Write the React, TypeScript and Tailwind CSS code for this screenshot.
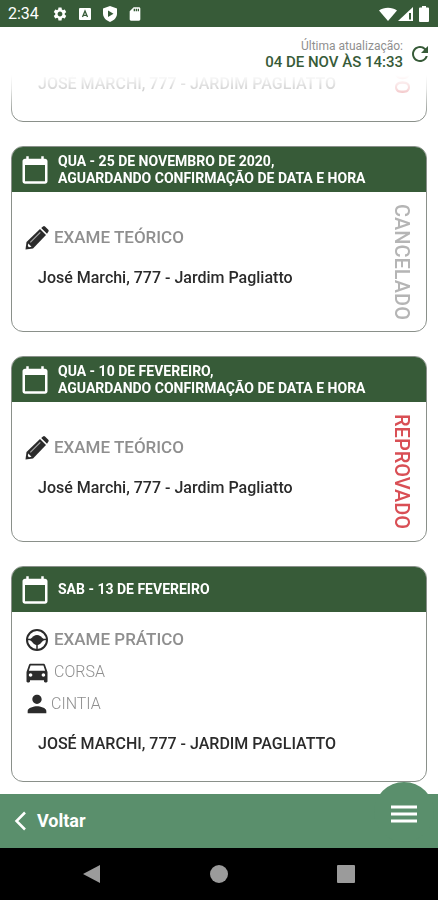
import { MdCalendarToday, MdDirectionsCar, MdPerson, MdRefresh, MdSdCard, MdSettings } from "react-icons/md"

type Exam = {
    id: number;
    title: string[];
    kind: "theory" | "practice";
    address: string;
    car?: string;
    teacher?: string;
    status?: "CANCELADO" | "REPROVADO";
}

const exams: Exam[] = [
    {
        id: 1,
        title: ["TER - 10 DE NOVEMBRO"],
        kind: "practice",
        car: "CORSA",
        teacher: "CINTIA",
        address: "JOSÉ MARCHI, 777 - JARDIM PAGLIATTO",
        status: "REPROVADO",
    },
    {
        id: 2,
        title: ["QUA - 25 DE NOVEMBRO DE 2020,", "AGUARDANDO CONFIRMAÇÃO DE DATA E HORA"],
        kind: "theory",
        address: "José Marchi, 777 - Jardim Pagliatto",
        status: "CANCELADO",
    },
    {
        id: 3,
        title: ["QUA - 10 DE FEVEREIRO,", "AGUARDANDO CONFIRMAÇÃO DE DATA E HORA"],
        kind: "theory",
        address: "José Marchi, 777 - Jardim Pagliatto",
        status: "REPROVADO",
    },
    {
        id: 4,
        title: ["SAB - 13 DE FEVEREIRO"],
        kind: "practice",
        car: "CORSA",
        teacher: "CINTIA",
        address: "JOSÉ MARCHI, 777 - JARDIM PAGLIATTO",
    },
]

const Pencil = () => (
    <svg viewBox="0 0 24 24" className="size-6 shrink-0" aria-hidden="true">
        <path d="M15 3l6 6L8 22.500.5 23.500 1.500 16z" fill="currentColor" />
        <path d="M16.200 2L18 .5q1-.8 2 0l3.300 3.300q.8 1 0 2L22 7.800z" fill="currentColor" />
        <path d="M3.300 17.500l3.200 3.200-2.500.5-1.200-1.200z" fill="#fff" />
        <path d="M15.300 6.300L5.300 16.300" stroke="#a5a5a5" strokeWidth="1.200" />
    </svg>
)

const SteeringWheel = () => (
    <svg viewBox="0 0 24 24" className="size-6 shrink-0" aria-hidden="true">
        <circle cx="12" cy="12" r="10" fill="none" stroke="currentColor" strokeWidth="2" />
        <path d="M2 11.500h20M12 14v8" stroke="currentColor" strokeWidth="1.500" />
        <path
            fill="currentColor"
            d="M5.500 11L8.500 8.200Q12 5.800 15.500 8.200L18.500 11v1.200L15.500 15.500Q12 18.500 8.500 15.500L5.500 12.200z"
        />
    </svg>
)

const StatusBar = () => (
    <div className="flex h-[27px] shrink-0 items-center justify-between bg-[#375b38] px-2 text-white">
        <div className="flex items-center gap-[9px]">
            <span className="mr-[3px] w-8 text-base">2:34</span>
            <MdSettings className="size-4" />
            <svg viewBox="0 0 16 16" className="size-4" aria-hidden="true">
                <rect x="2" y="2" width="12" height="12" rx="1" fill="#fff" />
                <path d="M5.500 11L8 5l2.500 6M6.500 9.300h3" fill="none" stroke="#375b38" strokeWidth="1.300" />
            </svg>
            <svg viewBox="0 0 16 16" className="size-4" aria-hidden="true">
                <path d="M8 0l7 2.500v5c0 4-3 7-7 8.500-4-1.500-7-4.500-7-8.500v-5z" fill="#fff" />
                <path d="M6 4.500l5.500 3.300L6 11z" fill="#375b38" />
            </svg>
            <MdSdCard className="size-4" />
        </div>
        <div className="flex items-center">
            <svg viewBox="0 0 18 16" className="h-4 w-5" aria-hidden="true">
                <path d="M0 4.500C5 .8 13 .8 18 4.500L9 15z" fill="#fff" />
            </svg>
            <svg viewBox="0 0 16 16" className="size-4" aria-hidden="true">
                <path d="M15 1v14H0z" fill="#fff" />
                <path d="M11 7h2v6.500h-2z" fill="#375b38" />
            </svg>
            <svg viewBox="0 0 10 16" className="ml-1 h-4 w-3" aria-hidden="true">
                <path d="M3 0h4v1.500h2q1 0 1 1V15q0 1-1 1H1q-1 0-1-1V2.500q0-1 1-1h2z" fill="#fff" />
            </svg>
        </div>
    </div>
)

const ExamCard = ({ exam }: { exam: Exam }) => (
    <article className="shrink-0 overflow-hidden rounded-xl border border-[#8a908a] bg-white">
        <h2 className="flex h-[45px] items-center gap-2 bg-[#375b38] pl-2 text-sm/[17px] font-bold text-white">
            <MdCalendarToday className="size-[30px] shrink-0" />
            <span>
                {exam.title.map((line) => (
                    <span key={line} className="block">{line}</span>
                ))}
            </span>
        </h2>
        <div className="flex justify-between">
            {exam.kind === "theory" ? (
                <div className="h-[139px] pt-[34px] pl-[13px]">
                    <p className="flex h-6 items-center gap-[5px] text-[17px] font-medium text-[#8f8f8f]">
                        <span className="text-[#2b2b2b]"><Pencil /></span>
                        EXAME TEÓRICO
                    </p>
                    <p className="mt-4 pl-[13px] text-base/6 font-medium text-[#2b2b2b]">{exam.address}</p>
                </div>
            ) : (
                <div className="pt-4 pb-[25px] pl-[13px] text-base text-[#8f8f8f]">
                    <p className="flex h-6 items-center gap-[5px] text-[17px] font-medium">
                        <span className="text-[#2b2b2b]"><SteeringWheel /></span>
                        EXAME PRÁTICO
                    </p>
                    <p className="mt-2 flex h-6 items-center gap-[5px] font-light">
                        <span className="flex w-6 justify-center text-[#2b2b2b]">
                            <MdDirectionsCar className="size-7 shrink-0" />
                        </span>
                        {exam.car}
                    </p>
                    <p className="mt-2 flex h-6 items-center gap-[2px] font-light">
                        <span className="flex w-6 justify-center text-[#2b2b2b]">
                            <MdPerson className="size-7 shrink-0" />
                        </span>
                        {exam.teacher}
                    </p>
                    <p className="mt-4 pl-[13px] font-medium text-[#2b2b2b]">{exam.address}</p>
                </div>
            )}
            {exam.status && (
                <p className={`flex items-center justify-center pr-[10px] text-xl font-medium [writing-mode:vertical-rl] ${exam.status === "REPROVADO" ? "text-[#d94f55]" : "text-[#b5b5b5]"}`}>
                    {exam.status}
                </p>
            )}
        </div>
    </article>
)

const App = () => {
    return (
        <div className="flex h-screen flex-col bg-white font-[Roboto,sans-serif]">
            <StatusBar />

            <header className="flex h-12 shrink-0 items-center justify-end gap-[5px] pt-[5px] pr-[6px]">
                <div className="text-right">
                    <p className="text-xs/4 text-[#8f8f8f]">Última atualização:</p>
                    <p className="text-[15px]/4 font-medium text-[#375b38]">04 DE NOV ÀS 14:33</p>
                </div>
                <button type="button" aria-label="Atualizar" className="text-[#375b38]">
                    <MdRefresh className="size-6" />
                </button>
            </header>

            {/* reversed column keeps the list scrolled to the latest exam */}
            <main className="flex min-h-0 flex-1 flex-col-reverse overflow-y-auto px-[11px] pb-3 [mask-image:linear-gradient(transparent,rgb(0_0_0/0.2)_14px,black_42px)] [scrollbar-width:none]">
                <div className="flex flex-col gap-6">
                    {exams.map((exam) => (
                        <ExamCard key={exam.id} exam={exam} />
                    ))}
                </div>
            </main>

            <footer className="relative flex h-[54px] shrink-0 items-center bg-[#5a8f6c] px-2 text-white">
                <button type="button" className="flex items-center gap-[5px] text-lg font-bold">
                    <svg viewBox="0 0 24 24" className="size-6" aria-hidden="true">
                        <path d="M17 3.500L8.500 12l8.500 8.500" fill="none" stroke="currentColor" strokeWidth="2.500" />
                    </svg>
                    Voltar
                </button>
                <button type="button" aria-label="Menu" className="absolute -top-3 right-1 flex size-[60px] items-center justify-center rounded-full bg-[#5a8f6c] pt-1">
                    <svg viewBox="0 0 26 18" className="h-[18px] w-[26px]" aria-hidden="true">
                        <path d="M0 2h26M0 9h26M0 16h26" stroke="currentColor" strokeWidth="3" />
                    </svg>
                </button>
            </footer>

            <nav className="flex h-[52px] shrink-0 items-center justify-around bg-black px-7 text-[#9b9b9b]">
                <button type="button" aria-label="Voltar do sistema">
                    <svg viewBox="0 0 18 18" className="size-[18px]" aria-hidden="true"><path d="M17 0v18L0 9z" fill="currentColor" /></svg>
                </button>
                <button type="button" aria-label="Início">
                    <svg viewBox="0 0 18 18" className="size-[18px]" aria-hidden="true"><circle cx="9" cy="9" r="9" fill="currentColor" /></svg>
                </button>
                <button type="button" aria-label="Recentes">
                    <svg viewBox="0 0 18 18" className="size-[18px]" aria-hidden="true"><rect width="18" height="18" rx="1" fill="currentColor" /></svg>
                </button>
            </nav>
        </div>
    )
}

export default App
